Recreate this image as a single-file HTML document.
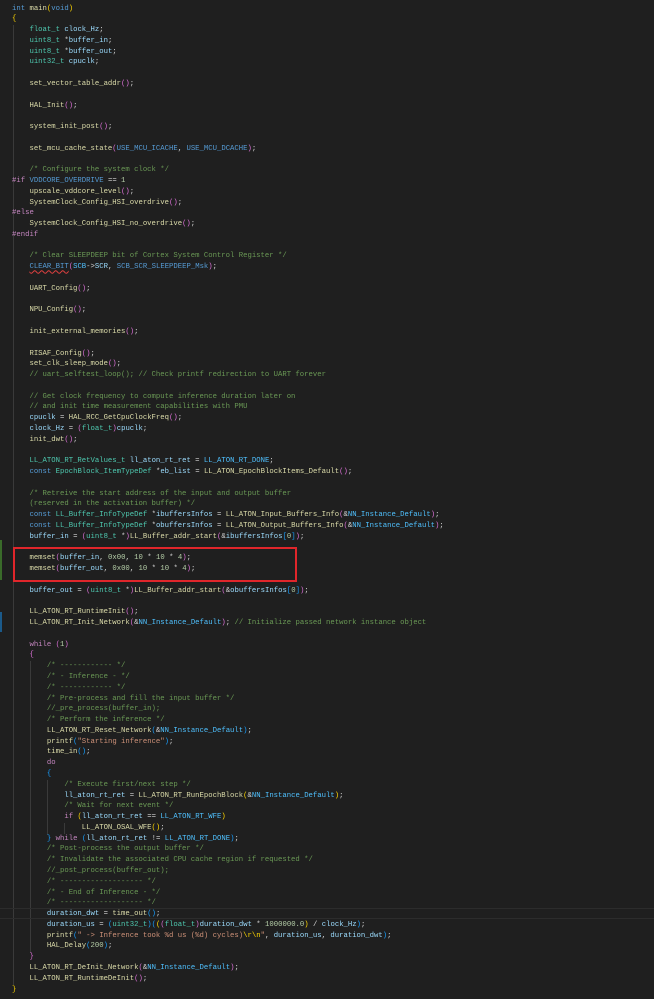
<!DOCTYPE html>
<html><head><meta charset="utf-8"><style>
html,body{margin:0;padding:0;background:#1f1f1f;width:654px;height:999px;overflow:hidden}
pre{position:absolute;left:12px;top:3.5px;margin:0;font-family:"Liberation Mono","DejaVu Sans Mono",monospace;font-size:7.28px;line-height:10.78px;color:#d4d4d4;white-space:pre}
.k{color:#569cd6}.t{color:#4ec9b0}.v{color:#9cdcfe}.f{color:#dcdcaa}.c{color:#6a9955}.s{color:#ce9178}.n{color:#b5cea8}.p{color:#c586c0}.m{color:#4fc1ff}.y{color:#ffd700}.q{color:#da70d6}.b{color:#179fff}
.g{position:absolute;width:1px;background:#3a3a3a}
</style></head><body>
<div class="g" style="left:13px;top:25px;height:960px"></div>
<div class="g" style="left:30px;top:661px;height:292px"></div>
<div class="g" style="left:47px;top:780px;height:55px"></div>
<div class="g" style="left:64px;top:823px;height:11px"></div>
<div style="position:absolute;left:0;top:908px;width:654px;height:11px;border-top:1px solid #2c2c2c;border-bottom:1px solid #2c2c2c;box-sizing:border-box"></div>
<div style="position:absolute;left:0;top:540px;width:2px;height:40px;background:#3a6b2a"></div>
<div style="position:absolute;left:0;top:612px;width:2px;height:20px;background:#1b5a8a"></div>
<pre><span class="k">int</span> <span class="f">main</span><span class="y">(</span><span class="k">void</span><span class="y">)</span>
<span class="y">{</span>
    <span class="t">float_t</span> <span class="v">clock_Hz</span>;
    <span class="t">uint8_t</span> *<span class="v">buffer_in</span>;
    <span class="t">uint8_t</span> *<span class="v">buffer_out</span>;
    <span class="t">uint32_t</span> <span class="v">cpuclk</span>;

    <span class="f">set_vector_table_addr</span><span class="q">()</span>;

    <span class="f">HAL_Init</span><span class="q">()</span>;

    <span class="f">system_init_post</span><span class="q">()</span>;

    <span class="f">set_mcu_cache_state</span><span class="q">(</span><span class="k">USE_MCU_ICACHE</span>, <span class="k">USE_MCU_DCACHE</span><span class="q">)</span>;

    <span class="c">/* Configure the system clock */</span>
<span class="p">#if</span> <span class="k">VDDCORE_OVERDRIVE</span> == <span class="n">1</span>
    <span class="f">upscale_vddcore_level</span><span class="q">()</span>;
    <span class="f">SystemClock_Config_HSI_overdrive</span><span class="q">()</span>;
<span class="p">#else</span>
    <span class="f">SystemClock_Config_HSI_no_overdrive</span><span class="q">()</span>;
<span class="p">#endif</span>

    <span class="c">/* Clear SLEEPDEEP bit of Cortex System Control Register */</span>
    <span class="k" style="text-decoration:underline wavy #e04040">CLEAR_BIT</span><span class="q">(</span><span class="m">SCB</span>-&gt;<span class="v">SCR</span>, <span class="k">SCB_SCR_SLEEPDEEP_Msk</span><span class="q">)</span>;

    <span class="f">UART_Config</span><span class="q">()</span>;

    <span class="f">NPU_Config</span><span class="q">()</span>;

    <span class="f">init_external_memories</span><span class="q">()</span>;

    <span class="f">RISAF_Config</span><span class="q">()</span>;
    <span class="f">set_clk_sleep_mode</span><span class="q">()</span>;
    <span class="c">// uart_selftest_loop(); // Check printf redirection to UART forever</span>

    <span class="c">// Get clock frequency to compute inference duration later on</span>
    <span class="c">// and init time measurement capabilities with PMU</span>
    <span class="v">cpuclk</span> = <span class="f">HAL_RCC_GetCpuClockFreq</span><span class="q">()</span>;
    <span class="v">clock_Hz</span> = <span class="q">(</span><span class="t">float_t</span><span class="q">)</span><span class="v">cpuclk</span>;
    <span class="f">init_dwt</span><span class="q">()</span>;

    <span class="t">LL_ATON_RT_RetValues_t</span> <span class="v">ll_aton_rt_ret</span> = <span class="m">LL_ATON_RT_DONE</span>;
    <span class="k">const</span> <span class="t">EpochBlock_ItemTypeDef</span> *<span class="v">eb_list</span> = <span class="f">LL_ATON_EpochBlockItems_Default</span><span class="q">()</span>;

    <span class="c">/* Retreive the start address of the input and output buffer</span>
<span class="c">    (reserved in the activation buffer) */</span>
    <span class="k">const</span> <span class="t">LL_Buffer_InfoTypeDef</span> *<span class="v">ibuffersInfos</span> = <span class="f">LL_ATON_Input_Buffers_Info</span><span class="q">(</span>&amp;<span class="m">NN_Instance_Default</span><span class="q">)</span>;
    <span class="k">const</span> <span class="t">LL_Buffer_InfoTypeDef</span> *<span class="v">obuffersInfos</span> = <span class="f">LL_ATON_Output_Buffers_Info</span><span class="q">(</span>&amp;<span class="m">NN_Instance_Default</span><span class="q">)</span>;
    <span class="v">buffer_in</span> = <span class="q">(</span><span class="t">uint8_t</span> *<span class="q">)</span><span class="f">LL_Buffer_addr_start</span><span class="q">(</span>&amp;<span class="v">ibuffersInfos</span><span class="b">[</span><span class="n">0</span><span class="b">]</span><span class="q">)</span>;

    <span class="f">memset</span><span class="q">(</span><span class="v">buffer_in</span>, <span class="n">0x00</span>, <span class="n">10</span> * <span class="n">10</span> * <span class="n">4</span><span class="q">)</span>;
    <span class="f">memset</span><span class="q">(</span><span class="v">buffer_out</span>, <span class="n">0x00</span>, <span class="n">10</span> * <span class="n">10</span> * <span class="n">4</span><span class="q">)</span>;

    <span class="v">buffer_out</span> = <span class="q">(</span><span class="t">uint8_t</span> *<span class="q">)</span><span class="f">LL_Buffer_addr_start</span><span class="q">(</span>&amp;<span class="v">obuffersInfos</span><span class="b">[</span><span class="n">0</span><span class="b">]</span><span class="q">)</span>;

    <span class="f">LL_ATON_RT_RuntimeInit</span><span class="q">()</span>;
    <span class="f">LL_ATON_RT_Init_Network</span><span class="q">(</span>&amp;<span class="m">NN_Instance_Default</span><span class="q">)</span>; <span class="c">// Initialize passed network instance object</span>

    <span class="p">while</span> <span class="q">(</span><span class="n">1</span><span class="q">)</span>
    <span class="q">{</span>
        <span class="c">/* ------------ */</span>
        <span class="c">/* - Inference - */</span>
        <span class="c">/* ------------ */</span>
        <span class="c">/* Pre-process and fill the input buffer */</span>
        <span class="c">//_pre_process(buffer_in);</span>
        <span class="c">/* Perform the inference */</span>
        <span class="f">LL_ATON_RT_Reset_Network</span><span class="b">(</span>&amp;<span class="m">NN_Instance_Default</span><span class="b">)</span>;
        <span class="f">printf</span><span class="b">(</span><span class="s">"Starting inference"</span><span class="b">)</span>;
        <span class="f">time_in</span><span class="b">()</span>;
        <span class="p">do</span>
        <span class="b">{</span>
            <span class="c">/* Execute first/next step */</span>
            <span class="v">ll_aton_rt_ret</span> = <span class="f">LL_ATON_RT_RunEpochBlock</span><span class="y">(</span>&amp;<span class="m">NN_Instance_Default</span><span class="y">)</span>;
            <span class="c">/* Wait for next event */</span>
            <span class="p">if</span> <span class="y">(</span><span class="v">ll_aton_rt_ret</span> == <span class="m">LL_ATON_RT_WFE</span><span class="y">)</span>
                <span class="f">LL_ATON_OSAL_WFE</span><span class="y">()</span>;
        <span class="b">}</span> <span class="p">while</span> <span class="b">(</span><span class="v">ll_aton_rt_ret</span> != <span class="m">LL_ATON_RT_DONE</span><span class="b">)</span>;
        <span class="c">/* Post-process the output buffer */</span>
        <span class="c">/* Invalidate the associated CPU cache region if requested */</span>
        <span class="c">//_post_process(buffer_out);</span>
        <span class="c">/* ------------------- */</span>
        <span class="c">/* - End of Inference - */</span>
        <span class="c">/* ------------------- */</span>
        <span class="v">duration_dwt</span> = <span class="f">time_out</span><span class="b">()</span>;
        <span class="v">duration_us</span> = <span class="b">(</span><span class="t">uint32_t</span><span class="b">)(</span><span class="y">(</span><span class="q">(</span><span class="t">float_t</span><span class="q">)</span><span class="v">duration_dwt</span> * <span class="n">1000000.0</span><span class="y">)</span> / <span class="v">clock_Hz</span><span class="b">)</span>;
        <span class="f">printf</span><span class="b">(</span><span class="s">" -&gt; Inference took %d us (%d) cycles)</span><span class="y">\r\n</span><span class="s">"</span>, <span class="v">duration_us</span>, <span class="v">duration_dwt</span><span class="b">)</span>;
        <span class="f">HAL_Delay</span><span class="b">(</span><span class="n">200</span><span class="b">)</span>;
    <span class="q">}</span>
    <span class="f">LL_ATON_RT_DeInit_Network</span><span class="q">(</span>&amp;<span class="m">NN_Instance_Default</span><span class="q">)</span>;
    <span class="f">LL_ATON_RT_RuntimeDeInit</span><span class="q">()</span>;
<span class="y">}</span></pre>
<div style="position:absolute;left:13px;top:547px;width:284px;height:35px;border:2px solid #e0262b;box-sizing:border-box"></div>
</body></html>
